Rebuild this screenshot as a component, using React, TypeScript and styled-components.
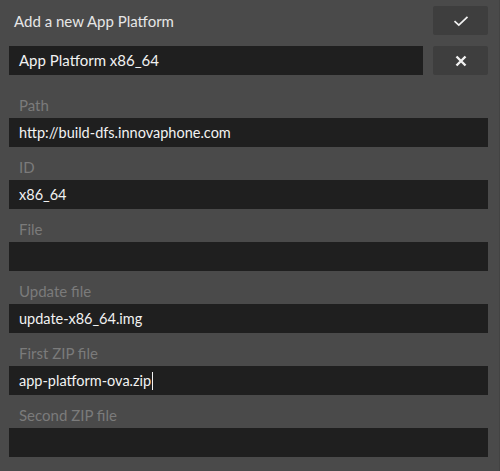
import React from "react";
import styled, { createGlobalStyle } from "styled-components";

const Global = createGlobalStyle`
  html, body { margin: 0; padding: 0; background: #4a4a4a; }
  body { font-family: Lato, "Open Sans", sans-serif; }
  * { box-sizing: border-box; }
`;

const Page = styled.div`
  width: 500px;
  height: 471px;
  background: #4a4a4a;
  padding: 6px 11px 0 9px;
  border-right: 1px solid #434343;
  overflow: hidden;
`;

const Row = styled.div<{ $mb?: number }>`
  display: flex;
  align-items: center;
  gap: 10px;
  height: 29px;
  margin-bottom: ${(p) => p.$mb ?? 0}px;
`;

const Title = styled.div`
  flex: 1;
  padding-left: 5px;
  color: #e6e6e6;
  font-size: 15px;
  line-height: 29px;
  margin-top: 1px;
`;

const IconButton = styled.button`
  width: 55px;
  height: 29px;
  border: none;
  border-radius: 2px;
  background: #3e3e3e;
  display: flex;
  align-items: center;
  justify-content: center;
  padding: 0;
`;

const Input = styled.div<{ $grow?: boolean }>`
  ${(p) => (p.$grow ? "flex: 1; font-size: 15px;" : "font-size: 14.5px;")}
  height: 29px;
  background: #1f1f1f;
  color: #f2f2f2;
  line-height: 29px;
  padding-left: 10px;
  white-space: nowrap;
  display: flex;
  align-items: center;
`;

const Field = styled.div`
  display: flex;
  flex-direction: column;
`;

const Label = styled.div<{ $first?: boolean }>`
  height: ${(p) => (p.$first ? 43 : 33)}px;
  display: flex;
  align-items: flex-end;
  padding: 0 0 4px 10px;
  color: #7b7b7b;
  font-size: 15px;
  line-height: 18px;
`;

const Caret = styled.span`
  display: inline-block;
  width: 1px;
  height: 18px;
  background: #f2f2f2;
  margin-left: 1px;
`;

const fields: { label: string; value: string; caret?: boolean }[] = [
  { label: "Path", value: "http://build-dfs.innovaphone.com" },
  { label: "ID", value: "x86_64" },
  { label: "File", value: "" },
  { label: "Update file", value: "update-x86_64.img" },
  { label: "First ZIP file", value: "app-platform-ova.zip", caret: true },
  { label: "Second ZIP file", value: "" },
];

export default function App() {
  return (
    <>
      <Global />
      <Page>
        <Row $mb={11}>
          <Title>Add a new App Platform</Title>
          <IconButton>
            <svg width="16" height="12" viewBox="0 0 16 12">
              <path d="M1.5 6.2 L5.8 10.2 L14.5 1.8" stroke="#f2f2f2" strokeWidth="1.7" fill="none" />
            </svg>
          </IconButton>
        </Row>
        <Row>
          <Input $grow>App Platform x86_64</Input>
          <IconButton>
            <svg width="12" height="12" viewBox="0 0 12 12">
              <path d="M1.5 1.5 L10.5 10.5 M10.5 1.5 L1.5 10.5" stroke="#f2f2f2" strokeWidth="2.4" fill="none" />
            </svg>
          </IconButton>
        </Row>
        {fields.map((f, i) => (
          <Field key={f.label}>
            <Label $first={i === 0}>{f.label}</Label>
            <Input>
              {f.value}
              {f.caret && <Caret />}
            </Input>
          </Field>
        ))}
      </Page>
    </>
  );
}
